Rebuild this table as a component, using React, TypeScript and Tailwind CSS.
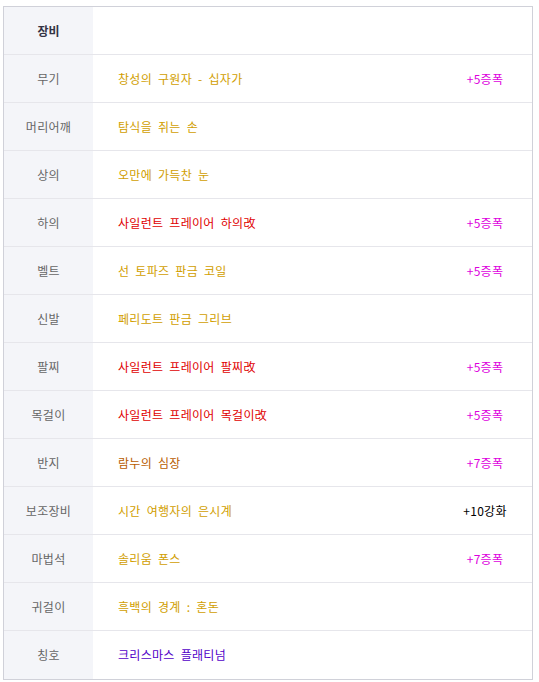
import React from 'react';

type Row = { slot: string; name: string; color: string; stat?: string; statColor?: string };

const rows: Row[] = [
  { slot: '무기', name: '창성의 구원자 - 십자가', color: 'text-[#d19e00]', stat: '+5증폭', statColor: 'text-[#dd00dd]' },
  { slot: '머리어깨', name: '탐식을 쥐는 손', color: 'text-[#d19e00]' },
  { slot: '상의', name: '오만에 가득찬 눈', color: 'text-[#d19e00]' },
  { slot: '하의', name: '사일런트 프레이어 하의改', color: 'text-[#e00000]', stat: '+5증폭', statColor: 'text-[#dd00dd]' },
  { slot: '벨트', name: '선 토파즈 판금 코일', color: 'text-[#d19e00]', stat: '+5증폭', statColor: 'text-[#dd00dd]' },
  { slot: '신발', name: '페리도트 판금 그리브', color: 'text-[#d19e00]' },
  { slot: '팔찌', name: '사일런트 프레이어 팔찌改', color: 'text-[#e00000]', stat: '+5증폭', statColor: 'text-[#dd00dd]' },
  { slot: '목걸이', name: '사일런트 프레이어 목걸이改', color: 'text-[#e00000]', stat: '+5증폭', statColor: 'text-[#dd00dd]' },
  { slot: '반지', name: '람누의 심장', color: 'text-[#b85c00]', stat: '+7증폭', statColor: 'text-[#dd00dd]' },
  { slot: '보조장비', name: '시간 여행자의 은시계', color: 'text-[#d19e00]', stat: '+10강화', statColor: 'text-black' },
  { slot: '마법석', name: '솔리움 폰스', color: 'text-[#d19e00]', stat: '+7증폭', statColor: 'text-[#dd00dd]' },
  { slot: '귀걸이', name: '흑백의 경계 : 혼돈', color: 'text-[#d19e00]' },
  { slot: '칭호', name: '크리스마스 플래티넘', color: 'text-[#5200c8]' },
];

export default function App() {
  return (
    <div className="bg-white min-h-screen pt-[6px] pl-[3px] font-['Noto_Sans_CJK_KR','Noto_Sans',sans-serif] text-[12px]">
      <div className="w-[530px] border border-[#d0d1d9]">
        {/* header */}
        <div className="flex h-[48px] border-b border-[#e6e6eb]">
          <div className="w-[89px] bg-[#f4f5f9] flex items-center justify-center font-bold text-[#333344]">장비</div>
          <div className="flex-1" />
        </div>
        {rows.map((r, i) => (
          <div
            key={i}
            className={`flex h-[48px] ${i < rows.length - 1 ? 'border-b border-[#e6e6eb]' : 'h-[47px]'}`}
          >
            <div className="w-[89px] bg-[#f4f5f9] flex items-center justify-center text-[#666666] tracking-[0.3px]">{r.slot}</div>
            <div className={`flex-1 flex items-center pl-[25px] [word-spacing:3px] tracking-[0.3px] ${r.color}`}>{r.name}</div>
            <div className={`w-[94px] flex items-center justify-center tracking-[0.3px] ${r.statColor ?? ''}`}>{r.stat}</div>
          </div>
        ))}
      </div>
    </div>
  );
}
